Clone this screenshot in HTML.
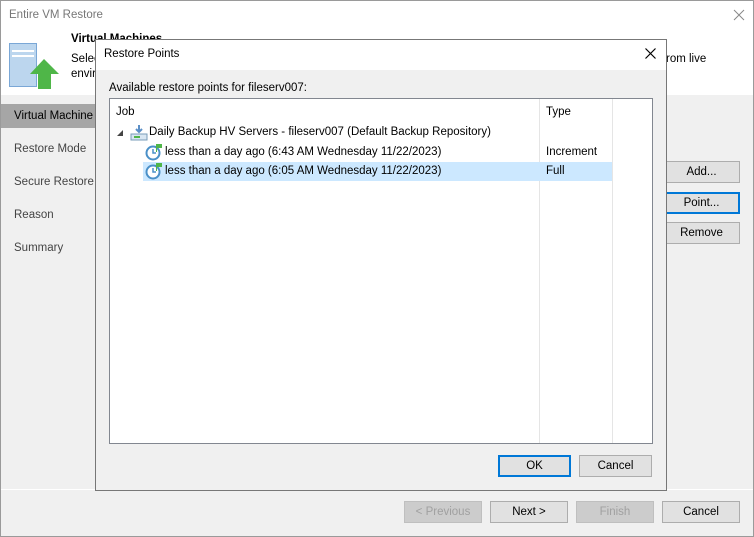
<!DOCTYPE html>
<html><head><meta charset="utf-8"><style>
*{margin:0;padding:0;box-sizing:border-box}
body{width:754px;height:537px;overflow:hidden;font-family:"Liberation Sans",sans-serif;font-size:11.5px;color:#000;background:#fff;position:relative}
.a{position:absolute;white-space:nowrap}
.btn{position:absolute;height:22px;border:1px solid #adadad;background:#e1e1e1;text-align:center;line-height:20px;font-size:11.5px}
.dis{color:#a0a0a0;background:#cccccc;border-color:#bfbfbf}
</style></head><body>
<div class="a" style="left:0;top:0;width:754px;height:537px;border:1px solid #9a9a9a"></div>
<div class="a" style="left:9px;top:9px;color:#777">Entire VM Restore</div>
<svg class="a" style="left:733px;top:9px" width="12" height="12"><path d="M1 1 L11 11 M11 1 L1 11" stroke="#888" stroke-width="1"/></svg>
<!-- header icon -->
<div class="a" style="left:9px;top:43px;width:28px;height:44px;background:#bcd6ee;border:1px solid #7aa7d6"></div>
<div class="a" style="left:12px;top:50px;width:22px;height:2px;background:#fff"></div>
<div class="a" style="left:12px;top:55px;width:22px;height:2px;background:#fff"></div>
<svg class="a" style="left:30px;top:59px" width="30" height="30"><path d="M14 0 L29 15 L21 15 L21 30 L8 30 L8 15 L0 15 Z" fill="#4fb648"/></svg>
<div class="a" style="left:71px;top:33px;font-weight:bold">Virtual Machines</div>
<div class="a" style="left:71px;top:53px">Select</div>
<div class="a" style="left:71px;top:68px">envir</div>
<div class="a" style="left:666px;top:53px">rom live</div>
<!-- body gray -->
<div class="a" style="left:1px;top:95px;width:752px;height:441px;background:#f0f0f0"></div>
<div class="a" style="left:1px;top:104px;width:95px;height:24px;background:#a6a6a6"></div>
<div class="a" style="left:14px;top:110px">Virtual Machine</div>
<div class="a" style="left:14px;top:143px;color:#444">Restore Mode</div>
<div class="a" style="left:14px;top:176px;color:#444">Secure Restore</div>
<div class="a" style="left:14px;top:209px;color:#444">Reason</div>
<div class="a" style="left:14px;top:242px;color:#444">Summary</div>
<div class="btn" style="left:663px;top:161px;width:77px">Add...</div>
<div class="btn" style="left:663px;top:192px;width:77px;border:2px solid #0078d7;line-height:18px">Point...</div>
<div class="btn" style="left:663px;top:222px;width:77px">Remove</div>
<div class="a" style="left:1px;top:489px;width:752px;height:1px;background:#fff"></div>
<div class="btn dis" style="left:404px;top:501px;width:78px">&lt; Previous</div>
<div class="btn" style="left:490px;top:501px;width:78px">Next &gt;</div>
<div class="btn dis" style="left:576px;top:501px;width:78px">Finish</div>
<div class="btn" style="left:662px;top:501px;width:78px">Cancel</div>
<!-- dialog -->
<div class="a" style="left:95px;top:39px;width:572px;height:452px;background:#f0f0f0;border:1px solid #777"></div>
<div class="a" style="left:96px;top:40px;width:570px;height:30px;background:#fff"></div>
<div class="a" style="left:104px;top:48px">Restore Points</div>
<svg class="a" style="left:645px;top:48px" width="11" height="11"><path d="M0.5 0.5 L10.5 10.5 M10.5 0.5 L0.5 10.5" stroke="#000" stroke-width="1.2"/></svg>
<div class="a" style="left:109px;top:82px">Available restore points for fileserv007:</div>
<div class="a" style="left:109px;top:98px;width:544px;height:346px;background:#fff;border:1px solid #828790"></div>
<div class="a" style="left:539px;top:99px;width:1px;height:344px;background:#e5e5e5"></div>
<div class="a" style="left:612px;top:99px;width:1px;height:344px;background:#e5e5e5"></div>
<div class="a" style="left:116px;top:106px">Job</div>
<div class="a" style="left:546px;top:106px">Type</div>
<div class="a" style="left:143px;top:162px;width:469px;height:19px;background:#cce8ff"></div>
<svg class="a" style="left:117px;top:129px" width="8" height="8"><path d="M6 1 L6 7 L0 7 Z" fill="#444"/></svg>
<svg class="a" style="left:130px;top:124px" width="18" height="18"><rect x="1" y="10" width="16" height="6" fill="#d8e6f2" stroke="#7a9cb8"/><rect x="4" y="12" width="6" height="2" fill="#4fb648"/><path d="M9 1 V8 M6 5 L9 8 L12 5" stroke="#5b8fc7" stroke-width="2" fill="none"/></svg>
<div class="a" style="left:149px;top:126px">Daily Backup HV Servers - fileserv007 (Default Backup Repository)</div>
<svg class="a" style="left:145px;top:143px" width="18" height="18"><circle cx="8" cy="10" r="6.5" fill="#fff" stroke="#4a90c8" stroke-width="2"/><path d="M8 6 V10 H11" stroke="#4a90c8" stroke-width="1.5" fill="none"/><rect x="12" y="1" width="5" height="4" fill="#4fb648"/><rect x="11" y="1" width="1" height="8" fill="#4fb648"/></svg>
<div class="a" style="left:165px;top:146px">less than a day ago (6:43 AM Wednesday 11/22/2023)</div>
<div class="a" style="left:546px;top:146px">Increment</div>
<svg class="a" style="left:145px;top:162px" width="18" height="18"><circle cx="8" cy="10" r="6.5" fill="#fff" stroke="#4a90c8" stroke-width="2"/><path d="M8 6 V10 H11" stroke="#4a90c8" stroke-width="1.5" fill="none"/><rect x="12" y="1" width="5" height="4" fill="#4fb648"/><rect x="11" y="1" width="1" height="8" fill="#4fb648"/></svg>
<div class="a" style="left:165px;top:165px">less than a day ago (6:05 AM Wednesday 11/22/2023)</div>
<div class="a" style="left:546px;top:165px">Full</div>
<div class="btn" style="left:498px;top:455px;width:73px;border:2px solid #0078d7;line-height:18px">OK</div>
<div class="btn" style="left:579px;top:455px;width:73px">Cancel</div>
</body></html>
